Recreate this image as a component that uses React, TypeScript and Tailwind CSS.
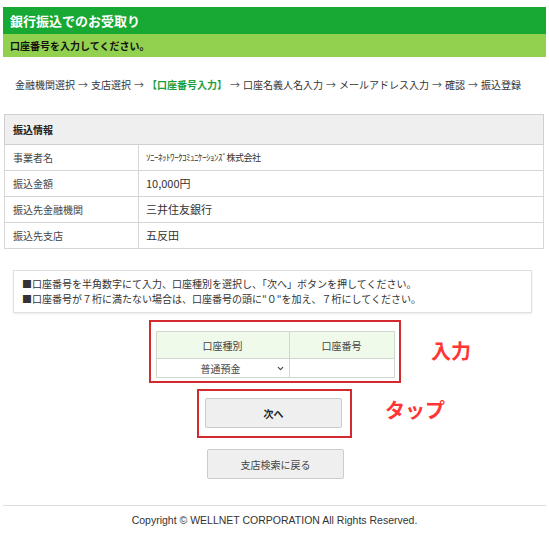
import { ChevronDown } from "lucide-react";

const info = [
  { label: "事業者名", value: "ｿﾆｰﾈｯﾄﾜｰｸｺﾐｭﾆｹｰｼｮﾝｽﾞ株式会社", small: true },
  { label: "振込金額", value: "10,000円" },
  { label: "振込先金融機関", value: "三井住友銀行" },
  { label: "振込先支店", value: "五反田" },
];

const steps = ["金融機関選択", "支店選択", "【口座番号入力】", "口座名義人名入力", "メールアドレス入力", "確認", "振込登録"];

export default function App() {
  return (
    <div className="w-[549px] min-h-[533px] bg-white pt-[7px] text-[#333] font-['Noto_Sans_CJK_JP','Noto_Sans',sans-serif]">
      <div className="mx-[3px] h-[27px] bg-[#17a934] pl-[7px] flex items-center text-white font-bold text-[13px]">
        銀行振込でのお受取り
      </div>
      <div className="mx-[3px] h-[23px] bg-[#92d14f] pl-[7px] flex items-center text-[#111] font-bold text-[10px]">
        口座番号を入力してください。
      </div>

      <div className="mt-[21px] pl-[15px] text-[10px] leading-[14px] whitespace-nowrap">
        {steps.map((s, i) => (
          <span key={s}>
            {i > 0 && <span className="mx-[3px] text-[#555]">→</span>}
            <span className={i === 2 ? "text-[#1b9e3e] font-bold" : ""}>{s}</span>
          </span>
        ))}
      </div>

      <table className="mt-[22px] ml-[4px] w-[540px] border-collapse text-[10px]">
        <tbody>
          <tr className="h-[30px] bg-[#efefef]">
            <td colSpan={2} className="border border-[#cfcfcf] pl-[8px] font-bold text-[#222]">
              振込情報
            </td>
          </tr>
          {info.map((r) => (
            <tr key={r.label} className="h-[26px]">
              <td className="w-[134px] border border-[#d6d6d6] pl-[8px] text-[#444]">{r.label}</td>
              <td className={`border border-[#d6d6d6] pl-[7px] ${r.small ? "text-[9px] tracking-[-0.5px]" : "text-[11px]"} text-[#333]`}>
                {r.value}
              </td>
            </tr>
          ))}
        </tbody>
      </table>

      <div className="mt-[21px] ml-[13px] w-[519px] h-[43px] border border-[#e0e0e0] shadow-[0_1px_2px_rgba(0,0,0,0.08)] px-[8px] pt-[6px] text-[10px] leading-[14.5px] text-[#333] whitespace-nowrap">
        <p>■口座番号を半角数字にて入力、口座種別を選択し、「次へ」ボタンを押してください。</p>
        <p>■口座番号が７桁に満たない場合は、口座番号の頭に"０"を加え、７桁にしてください。</p>
      </div>

      <div className="relative mt-[7px] flex justify-center">
        <div className="w-[252px] h-[63px] border-2 border-[#d42a2f] pt-[9px] pl-[5px] pr-[4px]">
          <div className="grid grid-cols-[133px_1fr] border border-[#cfd8cc] text-[10px] text-[#444]">
            <div className="h-[27px] bg-[#effaea] border-r border-b border-[#cfd8cc] flex items-center justify-center">口座種別</div>
            <div className="h-[27px] bg-[#effaea] border-b border-[#cfd8cc] flex items-center justify-center">口座番号</div>
            <div className="h-[18px] border-r border-[#cfd8cc] flex items-center pl-[44px] pr-[4px]">
              <span className="flex-1">普通預金</span>
              <ChevronDown className="w-[9px] h-[9px] text-[#444]" strokeWidth={3} />
            </div>
            <div className="h-[18px]" />
          </div>
        </div>
        <span className="absolute left-[431px] top-[16px] text-[20px] font-bold text-[#ff3535]">入力</span>
      </div>

      <div className="relative mt-[6px] flex justify-center">
        <div className="w-[155px] h-[49px] border-2 border-[#d42a2f] pt-[7px] pl-[6px]">
          <button className="w-[137px] h-[30px] bg-[#efefef] border border-[#cccccc] rounded-[2px] text-[10px] font-bold text-[#222]">
            次へ
          </button>
        </div>
        <span className="absolute left-[385px] top-[6px] text-[20px] font-bold text-[#ff3535]">タップ</span>
      </div>

      <div className="mt-[11px] flex justify-center">
        <button className="ml-[2px] w-[137px] h-[30px] bg-[#efefef] border border-[#cccccc] rounded-[2px] text-[10px] text-[#444]">
          支店検索に戻る
        </button>
      </div>

      <div className="mt-[26px] mx-[3px] border-t border-[#dddddd]" />
      <p className="mt-[7px] text-center text-[10.5px] text-[#333] font-['Liberation_Sans',sans-serif]">
        Copyright © WELLNET CORPORATION All Rights Reserved.
      </p>
    </div>
  );
}
